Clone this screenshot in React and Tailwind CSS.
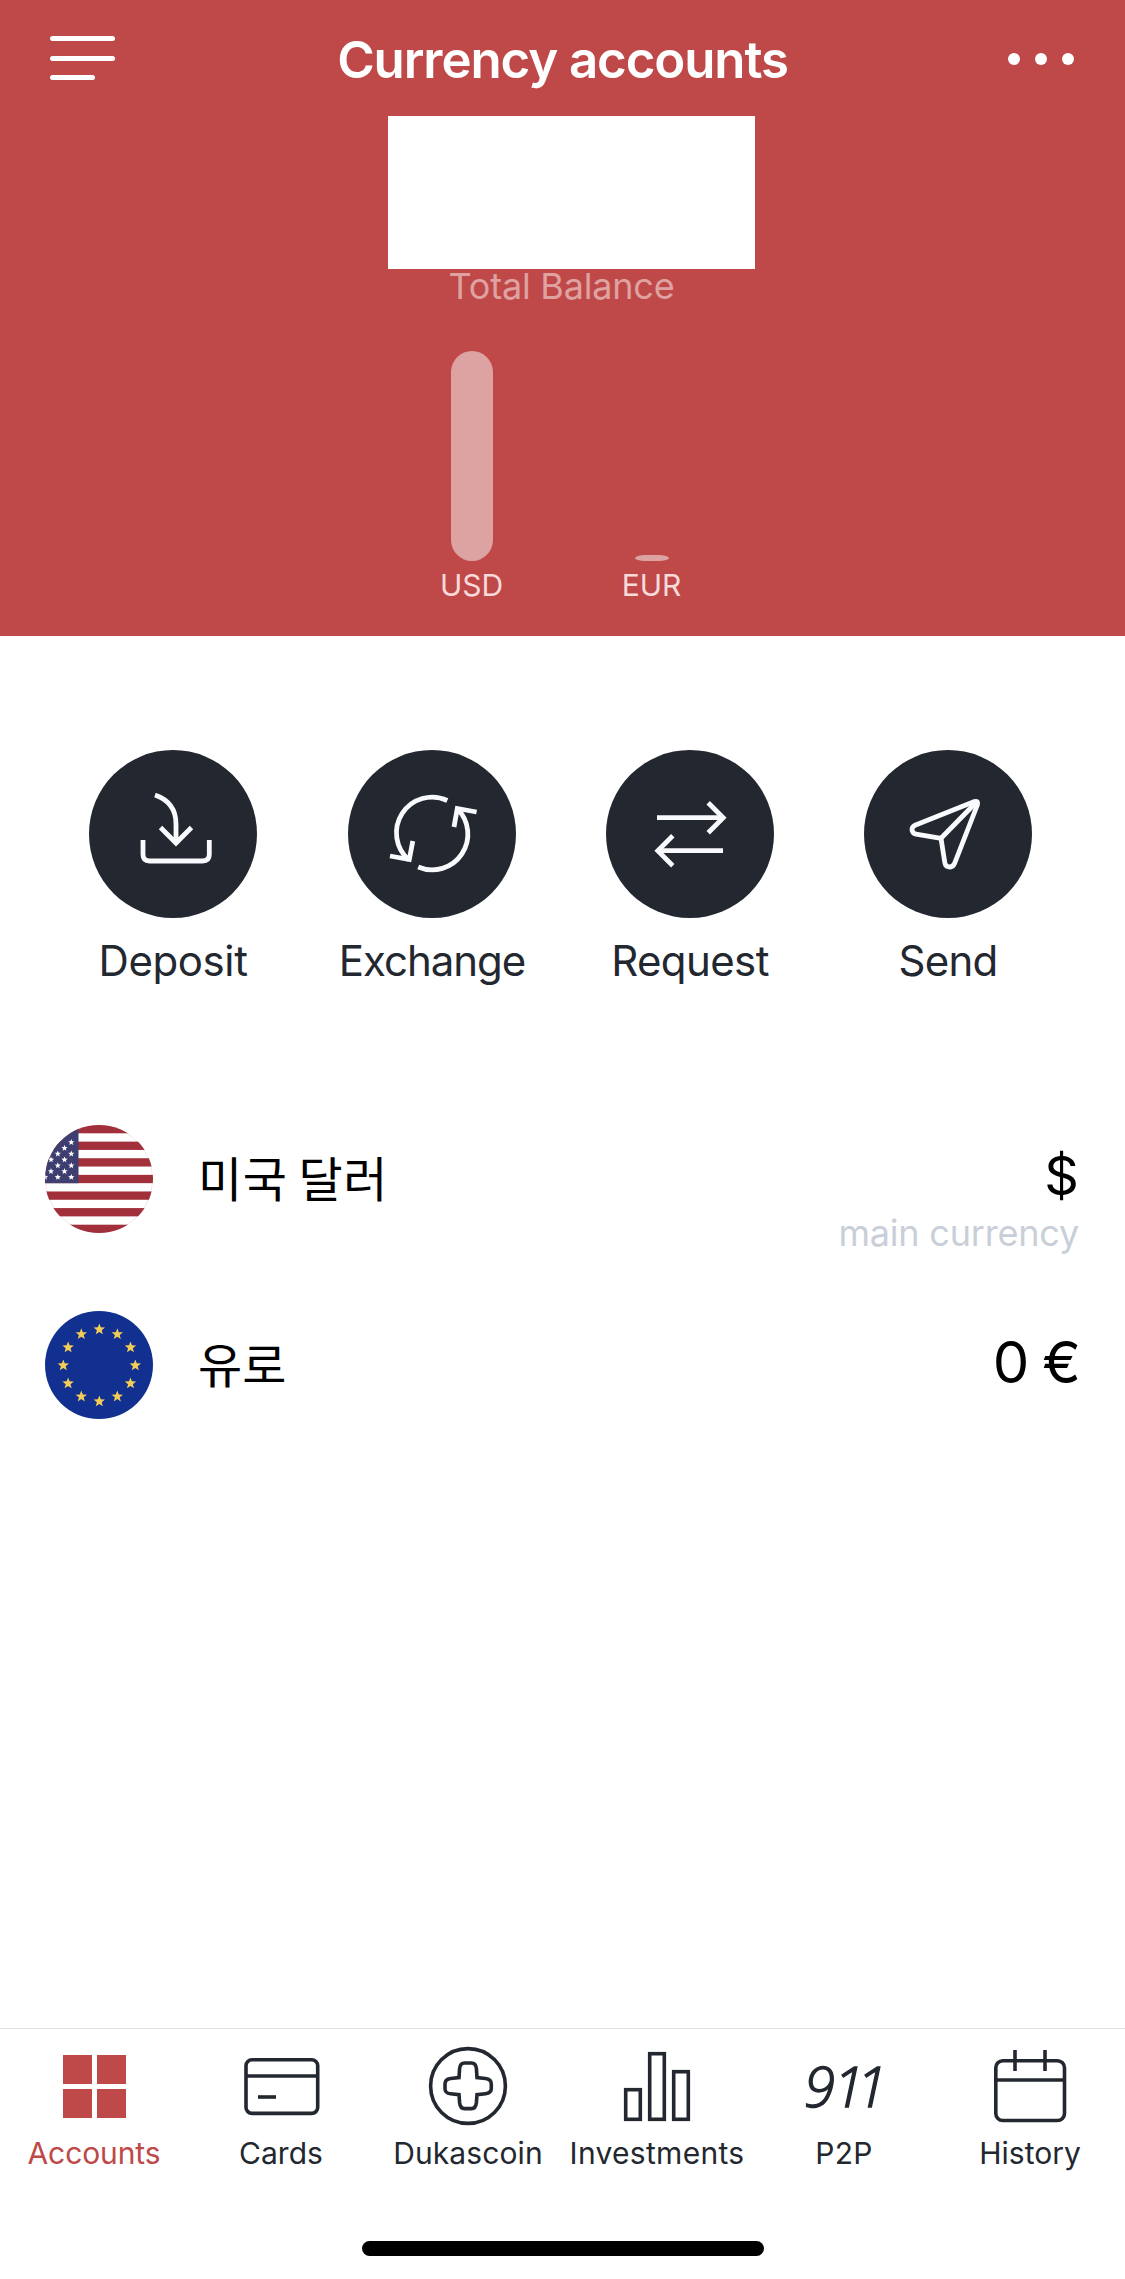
const balances = [
  { code: 'USD', bar: 'h-[210px] w-[42px] rounded-full' },
  { code: 'EUR', bar: 'h-[6px] w-[34px] rounded-[10px/3px]' },
]

const actions = [
  { name: 'Deposit', icon: DepositIcon, label: 'tracking-[-0.4px]' },
  { name: 'Exchange', icon: ExchangeIcon, label: 'tracking-[-1px]' },
  { name: 'Request', icon: RequestIcon, label: 'tracking-[-0.6px]' },
  { name: 'Send', icon: SendIcon, label: 'tracking-[-0.7px]' },
]

const tabs = [
  { name: 'Accounts', icon: AccountsIcon, label: 'tracking-[-0.1px]', active: true },
  { name: 'Cards', icon: CardsIcon, label: '' },
  { name: 'Dukascoin', icon: DukascoinIcon, label: 'tracking-[0.1px]' },
  { name: 'Investments', icon: InvestmentsIcon, label: 'pl-[2px] tracking-[0.3px]' },
  { name: 'P2P', icon: P2PIcon, label: 'tracking-[0.3px]' },
  { name: 'History', icon: HistoryIcon, label: 'pr-[2px]' },
]

function DepositIcon() {
  return (
    <>
      <path d="M66 45C79 49.5 87 59 87 74V94" />
      <path d="M71.5 77.5L87 93L102.5 77.5" />
      <path d="M54 90V104.5Q54 111 60.5 111H113.5Q120.3 111 120.3 104.5V90" />
    </>
  )
}

function ExchangeIcon() {
  return (
    <>
      <path d="M99.3 50.5A35.7 35.7 0 0 0 61 110" />
      <path d="M42 106L61.3 109.5L64.8 91" />
      <path d="M70.2 117A35.7 35.7 0 0 0 109 58.5" />
      <path d="M128.6 62L109.3 58.5L106 77" />
    </>
  )
}

function RequestIcon() {
  return (
    <>
      <path d="M51 67.7H117" />
      <path d="M102.2 52.7L117.2 67.7L102.2 82.7" />
      <path d="M117 100.7H51" />
      <path d="M66.8 85.7L51.8 100.7L66.8 115.7" />
    </>
  )
}

function SendIcon() {
  return (
    <>
      <path d="M110.500 51.5L51 75.2Q48 76.5 48 79.7Q48.2 83.5 52 84.2L77 88.3L80.8 112.5Q81.500 117 85.3 117Q89 117 90.5 113.5L113.5 54.5Q114.5 50.5 110.5 51.5Z" />
      <path d="M77 88.3L112 52.5" />
    </>
  )
}

function AccountsIcon() {
  return (
    <g fill="currentColor" stroke="none">
      <rect x="14" y="14" width="29" height="29" />
      <rect x="48" y="14" width="29" height="29" />
      <rect x="14" y="48" width="29" height="29" />
      <rect x="48" y="48" width="29" height="29" />
    </g>
  )
}

function CardsIcon() {
  return (
    <>
      <rect x="10" y="18.7" width="71.7" height="53.7" rx="6" />
      <path d="M10 35H81.7" />
      <path d="M22 56H40" />
    </>
  )
}

function DukascoinIcon() {
  return (
    <>
      <circle cx="45" cy="45" r="37.4" />
      <path d="M41.5 22H48.5C52 22 53 24 53.4 27.5L54 36.6L62.5 37.5C66.5 38 68.3 39.5 68.3 43V47.5C68.3 51 66.5 52.3 62.5 52.8L54 53.7L53.4 61.5C53 65.5 52 67.6 48.5 67.6H41.5C38 67.6 37 65.5 36.6 61.5L36 53.7L27.5 52.8C23.5 52.3 22 51 22 47.5V43C22 39.5 23.5 38 27.5 37.5L36 36.6L36.6 27.5C37 24 38 22 41.5 22Z" />
    </>
  )
}

function InvestmentsIcon() {
  return (
    <>
      <rect x="14.7" y="48.7" width="14.6" height="29.6" />
      <rect x="38.7" y="12.7" width="14.6" height="65.6" />
      <rect x="62.7" y="30.7" width="14.6" height="47.6" />
    </>
  )
}

function P2PIcon() {
  return (
    <text x="5" y="65.5" className="fill-current stroke-current stroke-[1.4px] font-['Open_Sans','Noto_Sans',sans-serif] text-[56px] font-light italic">
      <tspan className="tracking-[-1.5px]">9</tspan>
      <tspan className="tracking-[-8px]">11</tspan>
    </text>
  )
}

function HistoryIcon() {
  return (
    <>
      <rect x="9.8" y="19.8" width="68.7" height="59.7" rx="7" />
      <path d="M10 39H78.5" />
      <path d="M29 9V30" />
      <path d="M59 9V30" />
    </>
  )
}

function starPoints(cx, cy, r) {
  return Array.from({ length: 10 }, (_, i) => {
    const radius = i % 2 === 0 ? r : r * 0.42
    const angle = (Math.PI / 5) * i - Math.PI / 2
    return `${cx + radius * Math.cos(angle)},${cy + radius * Math.sin(angle)}`
  }).join(' ')
}

const usStars = [
  [26.3, 17.3], [19.5, 23], [12.8, 28.8], [26.3, 28.8], [6, 34.7], [19.5, 34.7],
  [12.8, 40.5], [26.3, 40.5], [6, 46.3], [19.5, 46.3], [0, 52.2], [12.8, 52.2], [26.3, 52.2],
]

function UsFlag() {
  return (
    <svg viewBox="0 0 108 108" className="size-[108px] rounded-full">
      <rect width="108" height="108" fill="#fff" />
      {[0, 2, 4, 6, 8, 10, 12].map((n) => (
        <rect key={n} y={(n * 108) / 13} width="108" height={108 / 13} fill="#a2303a" />
      ))}
      <rect width="33.5" height="58.2" fill="#3e3f70" />
      {usStars.map(([x, y]) => (
        <polygon key={`${x}-${y}`} points={starPoints(x, y, 3.3)} fill="#fff" />
      ))}
      <circle cx="54" cy="54" r="53.7" fill="none" stroke="#a2303a" strokeOpacity="0.25" strokeWidth="0.6" />
    </svg>
  )
}

function EuFlag() {
  return (
    <svg viewBox="0 0 108 108" className="size-[108px] rounded-full">
      <rect width="108" height="108" fill="#11308f" />
      {Array.from({ length: 12 }, (_, i) => {
        const a = (Math.PI / 6) * i
        return <polygon key={i} points={starPoints(54.3 + 36 * Math.cos(a), 54.4 + 36 * Math.sin(a), 6)} fill="#f3cd57" />
      })}
    </svg>
  )
}

function Header() {
  return (
    <header className="h-[636px] bg-[#be4948] text-white">
      <div className="flex h-[116px] items-center justify-between pt-[3px] pr-[51px] pl-[50px]">
        <button className="flex w-[65px] flex-col gap-[14.5px] pb-[3px]">
          <span className="h-[5px] w-[65px] rounded-full bg-white" />
          <span className="h-[5px] w-[65px] rounded-full bg-white" />
          <span className="h-[5px] w-[45px] rounded-full bg-white" />
        </button>
        <h1 className="pl-[2px] text-[51px] leading-[60px] font-semibold tracking-[-1.1px]">Currency accounts</h1>
        <button className="flex w-[66px] justify-between pb-px">
          <span className="size-[12px] rounded-full bg-white" />
          <span className="size-[12px] rounded-full bg-white" />
          <span className="size-[12px] rounded-full bg-white" />
        </button>
      </div>
      <div className="ml-[388px] h-[153px] w-[367px] bg-white" />
      <p className="pr-[2px] text-center text-[36px] leading-[34px] tracking-[-0.2px] text-[#dfa2a1]">Total Balance</p>
      <div className="mt-[48px] ml-[382px] flex items-end">
        {balances.map((b) => (
          <div key={b.code} className="flex w-[180px] flex-col items-center">
            <div className={`bg-[#dda3a3] ${b.bar}`} />
            <span className="mt-[9px] pr-px text-[30px] leading-[30px] text-[#f8dada]">{b.code}</span>
          </div>
        ))}
      </div>
    </header>
  )
}

export default function App() {
  return (
    <div className="flex h-[2279px] w-[1125px] flex-col overflow-hidden bg-white font-[Inter,'Noto_Sans_CJK_KR',sans-serif] text-[#23272f]">
      <Header />

      <section className="mt-[114px] ml-[89px] grid grid-cols-[259px_258px_258px_168px]">
        {actions.map(({ name, icon: Icon, label }) => (
          <button key={name} className="flex w-[168px] flex-col items-center">
            <span className="size-[168px] rounded-full bg-[#23272f]">
              <svg viewBox="0 0 168 168" className="size-[168px]" fill="none" stroke="#f8fafd" strokeWidth="4.8">
                <Icon />
              </svg>
            </span>
            <span className={`mt-[19px] text-[42px] leading-[48px] whitespace-nowrap ${label}`}>{name}</span>
          </button>
        ))}
      </section>

      <ul className="mt-[101px] pr-[46px] pl-[45px] text-black">
        <li className="flex h-[186px] items-center">
          <UsFlag />
          <span className="ml-[45px] pb-[6px] font-['Noto_Sans_CJK_KR',sans-serif] text-[48px] leading-[60px] tracking-[0.5px]">미국 달러</span>
          <div className="ml-auto flex h-full flex-col items-end pt-[60px]">
            <span className="text-[54px] leading-[60px]">$</span>
            <span className="mt-[5px] text-[36px] leading-[44px] tracking-[-0.2px] text-[#c8cfd8]">main currency</span>
          </div>
        </li>
        <li className="flex h-[186px] items-center">
          <EuFlag />
          <span className="ml-[45px] pb-[6px] font-['Noto_Sans_CJK_KR',sans-serif] text-[48px] leading-[60px]">유로</span>
          <div className="ml-auto flex h-full flex-col items-end pt-[60px]">
            <span className="text-[58px] leading-[60px] tracking-[-1.8px]">0 €</span>
          </div>
        </li>
      </ul>

      <nav className="mt-auto h-[251px] border-t border-[#e0e1e3] pt-[12px]">
        <div className="grid grid-cols-[188px_186px_188px_188px_188px_186px]">
          {tabs.map(({ name, icon: Icon, label, active }) => (
            <button key={name} className={`flex flex-col items-center ${active ? 'text-[#be4948]' : 'text-[#23272f]'}`}>
              <svg viewBox="0 0 90 90" className="size-[90px]" fill="none" stroke="currentColor" strokeWidth="3.6">
                <Icon />
              </svg>
              <span className={`mt-[7px] text-[30px] leading-[30px] whitespace-nowrap ${label}`}>{name}</span>
            </button>
          ))}
        </div>
        <div className="mt-[73px] ml-[362px] h-[15px] w-[402px] rounded-full bg-black" />
      </nav>
    </div>
  )
}
